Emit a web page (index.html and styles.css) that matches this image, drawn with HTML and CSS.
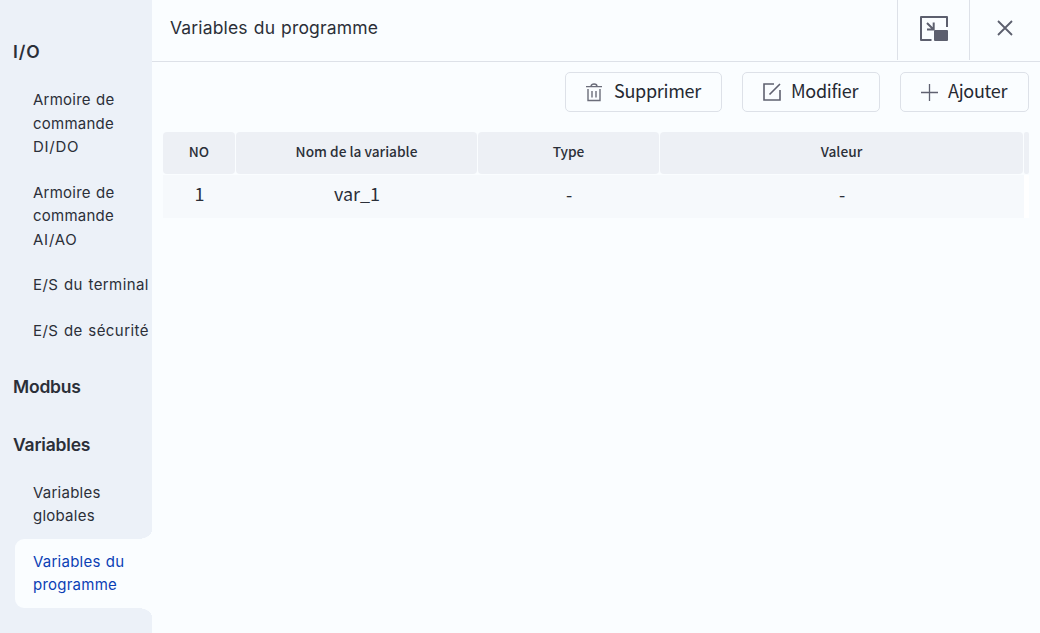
FILE: index.html
```html
<!DOCTYPE html>
<html lang="fr">
<head>
<meta charset="utf-8">
<title>Variables du programme</title>
<link rel="stylesheet" href="styles.css">
</head>
<body>
<div class="app">
  <nav class="sidebar">
    <section class="group">
      <h2 class="group-title title-io">I/O</h2>
      <a class="item">Armoire de<br>commande<br><span class="code">DI/DO</span></a>
      <a class="item item-analog">Armoire de<br>commande<br><span class="code">AI/AO</span></a>
      <a class="item item-wide">E/S du terminal</a>
      <a class="item item-wide">E/S de sécurité</a>
    </section>
    <section class="group">
      <h2 class="group-title">Modbus</h2>
    </section>
    <section class="group">
      <h2 class="group-title">Variables</h2>
      <a class="item">Variables<br>globales</a>
      <a class="item active">Variables du<br>programme</a>
    </section>
  </nav>
  <main class="main">
    <header class="topbar">
      <h1 class="title">Variables du programme</h1>
      <button class="tool" aria-label="Réduire">
        <svg width="28" height="26" viewBox="0 0 28 26" fill="none" stroke="#5c5f6e" stroke-width="2">
          <path d="M27 11V1H1v23h10.500" stroke-linejoin="round"/>
          <path d="M7 7l6 6M13.700 6.500v7H7"/>
          <rect x="14" y="14" width="14" height="11" rx="1" fill="#5c5f6e" stroke="none"/>
        </svg>
      </button>
      <button class="tool" aria-label="Fermer">
        <svg width="16" height="16" viewBox="0 0 16 16" fill="none" stroke="#5c5f6e" stroke-width="1.800">
          <path d="M1 1l14 14M15 1L1 15"/>
        </svg>
      </button>
    </header>
    <div class="actions">
      <button class="btn btn-delete">
        <svg width="16" height="19" viewBox="0 0 16 19" fill="none" stroke="#6b6d7a" stroke-width="1.400">
          <path d="M0 3.600h16M5 3.500C5 .2 11 .2 11 3.500M2 6v11.500h12V6M6 8v6.500M10 8v6.500"/>
        </svg>
        <span>Supprimer</span>
      </button>
      <button class="btn btn-edit">
        <svg width="18" height="18" viewBox="0 0 18 18" fill="none" stroke="#5f6170" stroke-width="1.600">
          <path d="M11 1H1v16h16V7M6.500 11.500L17 1"/>
        </svg>
        <span>Modifier</span>
      </button>
      <button class="btn btn-add">
        <svg width="17" height="17" viewBox="0 0 17 17" fill="none" stroke="#5f6170" stroke-width="1.300">
          <path d="M8.500 0v17M0 8.500h17"/>
        </svg>
        <span>Ajouter</span>
      </button>
    </div>
    <div class="table">
      <div class="row head">
        <div class="cell">NO</div>
        <div class="cell">Nom de la variable</div>
        <div class="cell">Type</div>
        <div class="cell">Valeur</div>
        <div class="cell gutter"></div>
      </div>
      <div class="row data">
        <div class="cell">1</div>
        <div class="cell">var_1</div>
        <div class="cell dash">-</div>
        <div class="cell dash">-</div>
        <div class="cell gutter"></div>
      </div>
    </div>
  </main>
</div>
</body>
</html>
```
FILE: styles.css
```css
* { box-sizing: border-box; }

body {
  margin: 0;
  color: #2b2f38;
  font-family: Inter, "Liberation Sans", sans-serif;
}

h1, h2 { margin: 0; }

button {
  padding: 0;
  border: 0;
  background: none;
  color: inherit;
  font: inherit;
}

svg { display: block; flex: none; }

.app {
  display: flex;
  width: 1040px;
  height: 633px;
  overflow: hidden;
  background: #fafdff;
}

/* Sidebar */
.sidebar {
  flex: none;
  width: 152px;
  padding-top: 27px;
  background: #ecf1f8;
}

.group { margin-bottom: 8px; }

.group-title {
  height: 50px;
  padding-left: 13px;
  font-size: 17.500px;
  font-weight: 600;
  line-height: 50px;
  letter-spacing: -0.200px;
}

.title-io { letter-spacing: 0.900px; }

.item {
  display: block;
  padding: 11.400px 0 11.400px 33px;
  font-size: 15px;
  line-height: 23.200px;
  letter-spacing: 0.240px;
  word-spacing: 0.800px;
  white-space: nowrap;
}

.item .code { letter-spacing: 0.750px; }

.item-analog {
  padding-top: 11.550px;
  padding-bottom: 10.950px;
  line-height: 23.300px;
}

.item-wide {
  height: 46px;
  letter-spacing: 0.420px;
  word-spacing: 1px;
}

.item.active {
  position: relative;
  margin-left: 15px;
  padding: 11.400px 0 11.600px 18px;
  border-radius: 9px 0 0 9px;
  background: #fafdff;
  color: #0b3fb5;
  line-height: 23px;
}

.item.active::before,
.item.active::after {
  content: "";
  position: absolute;
  right: 0;
  width: 14px;
  height: 9px;
}

.item.active::before {
  bottom: 100%;
  background: radial-gradient(ellipse 14px 9px at 0 0, #ecf1f8 98%, #fafdff 100%);
}

.item.active::after {
  top: 100%;
  background: radial-gradient(ellipse 14px 9px at 0 100%, #ecf1f8 98%, #fafdff 100%);
}

/* Main area */
.main { flex: 1; }

.topbar {
  display: flex;
  height: 62px;
  border-bottom: 1px solid #dde1e8;
}

.title {
  flex: 1;
  padding-left: 18px;
  font-size: 17.500px;
  font-weight: 400;
  line-height: 56px;
  letter-spacing: 0.160px;
  word-spacing: 0.900px;
}

.tool {
  display: flex;
  align-items: center;
  justify-content: center;
  width: 72px;
  height: 60px;
  padding-bottom: 3px;
  border-left: 1px solid #dde1e8;
}

.tool:last-child { width: 71px; padding-bottom: 4px; }

.actions {
  display: flex;
  justify-content: flex-end;
  gap: 20px;
  padding: 10px 11px 0 0;
}

.btn {
  display: flex;
  align-items: center;
  height: 40px;
  padding-left: 20px;
  border: 1px solid #dde1e8;
  border-radius: 5px;
  color: #252932;
  font: 18px/34px "Noto Sans CJK SC", sans-serif;
  letter-spacing: -0.280px;
}

.btn span { padding-bottom: 4px; }

.btn-delete { width: 157px; gap: 12px; }
.btn-edit { width: 138px; gap: 10px; }
.btn-add { width: 129px; gap: 10px; }

.table { padding: 20px 11px 0; }

.row {
  display: grid;
  grid-template-columns: 72px 241px 181px 363px 5px;
  gap: 1px;
  height: 42px;
  text-align: center;
}

.head .cell {
  border-radius: 4px;
  background: #edf0f5;
  font: 500 13.700px/38px "Noto Sans CJK SC", sans-serif;
}

.head .gutter { border-radius: 2px; }

.data {
  gap: 0;
  grid-template-columns: 73px 242px 182px 364px 5px;
  margin-top: 1px;
}

.data .cell {
  background: #f6f9fc;
  font: 18px/37px "Noto Sans CJK SC", sans-serif;
}

.data .dash { line-height: 38px; }

.data .gutter { height: 43px; background: #fff; }
```
